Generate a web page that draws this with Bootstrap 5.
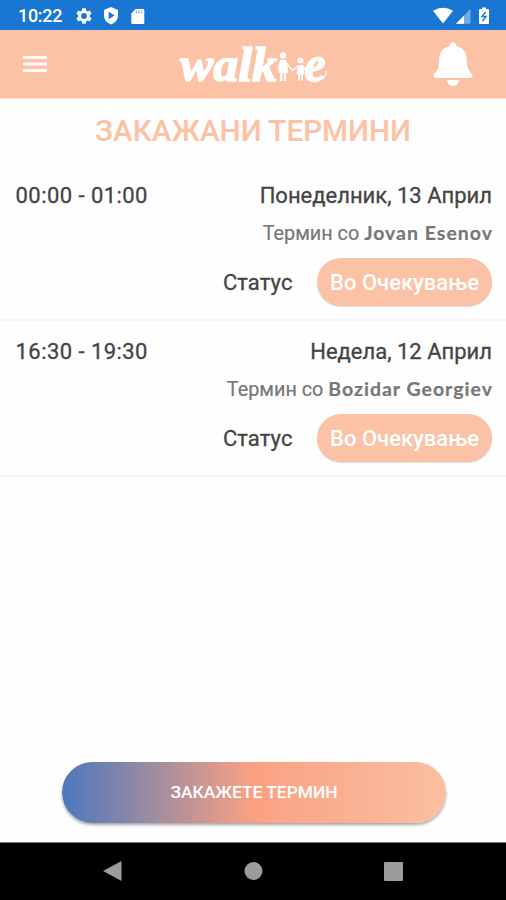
<!DOCTYPE html>
<html lang="mk">
<head>
<meta charset="utf-8">
<meta name="viewport" content="width=device-width, initial-scale=1">
<title>Walkie</title>
<link href="https://cdn.jsdelivr.net/npm/bootstrap@5.3.0/dist/css/bootstrap.min.css" rel="stylesheet">
<style>
body{font-family:Roboto,"Noto Sans",sans-serif;background:#fefefe;color:#444;height:900px;overflow:hidden}
svg{display:block;flex:none}
.statusbar{height:30px;background:#1976d2;padding:2px 15px 0 18px}
.clock{font-size:18px;font-weight:500;line-height:28px;letter-spacing:-.3px;width:58px;white-space:nowrap}
.appbar{height:69px;background:#fcc2a6;border-bottom:1px solid #fde0d2;padding:0 33px 0 22px}
.brand-mark{margin-left:26px}
.btn-plain{padding:0;border:0;background:none}
.page-title{height:66px;padding-top:14px;font-size:29.7px;line-height:36px;font-weight:500;color:#fcc2a6}
.slot{height:156px;padding:17px 14px 14px 15px;border:0;border-bottom:2px solid #f6f6f6!important;background:none;color:#444}
.slot-time,.slot-day,.slot-label{font-size:22px;line-height:28px;white-space:nowrap;-webkit-text-stroke:.3px #444}
.slot-time{letter-spacing:.12px;padding-left:.5px}
.slot-label{margin-right:24.500px;padding-top:2px;letter-spacing:.1px}
.slot-with{font-size:19.8px;line-height:24px;margin-top:11px;color:#777;white-space:nowrap;-webkit-text-stroke:.2px #777}
.slot-with b{font-family:Lato,sans-serif;font-weight:700;font-size:19.5px;letter-spacing:1px;margin-right:-1px}
.slot-state{margin-top:12px}
.pill{width:175px;height:48px;border-radius:24px;background:#fcc2a6;color:#fff;font-size:22px;font-weight:500;box-shadow:0 1px 1px #ddd;white-space:nowrap}
.book{width:384px;height:61px;border:0;border-radius:31px;color:#fff;font-size:17.4px;font-weight:500;background:linear-gradient(90deg,#4d77bd 0%,#fba183 50%,#fabfa2 100%);box-shadow:0 2px 3px rgba(0,0,0,.35);margin:auto 60px 19px 62px}
.navkeys{height:58px;background:#000;border-top:1px solid #777}
.t-time{letter-spacing:.45px}
</style>
<script src="https://cdn.jsdelivr.net/npm/bootstrap@5.3.0/dist/js/bootstrap.bundle.min.js"></script>
</head>
<body class="d-flex flex-column m-0">
<div class="statusbar d-flex align-items-center text-white">
  <span class="clock">10:22</span>
  <svg width="16" height="16" viewBox="2 2 20 20" fill="#fff"><path d="M19.14 12.94c.04-.3.06-.61.06-.94s-.02-.64-.07-.94l2.03-1.58a.49.49 0 0 0 .12-.61l-1.92-3.32a.49.49 0 0 0-.59-.22l-2.39.96a7 7 0 0 0-1.62-.94l-.36-2.54a.48.48 0 0 0-.48-.41h-3.84a.48.48 0 0 0-.47.41l-.36 2.54c-.59.24-1.13.57-1.62.94l-2.39-.96a.49.49 0 0 0-.59.22L2.74 8.87a.48.48 0 0 0 .12.61l2.03 1.58a7.500 7.500 0 0 0 0 1.880l-2.030 1.580a.49.49 0 0 0-.12.61l1.920 3.320c.12.22.37.29.59.22l2.390-.96c.5.38 1.030.7 1.620.94l.36 2.540c.05.24.24.41.48.41h3.840c.24 0 .44-.17.47-.41l.36-2.540a7 7 0 0 0 1.620-.94l2.390.96c.22.08.47 0 .59-.22l1.920-3.320a.49.49 0 0 0-.12-.61zM12 15.600A3.600 3.600 0 1 1 12 8.400a3.600 3.600 0 0 1 0 7.200z"/></svg>
  <svg class="ms-2" width="22" height="18" viewBox="0 0 22 18"><path fill="#fff" d="M11 0l7 3v5c0 5-3 8-7 9.500C7 16 4 13 4 8V3z"/><path fill="#1976d2" d="M8.600 4.800l6 3.700-6 3.700z"/></svg>
  <svg class="ms-2" width="15" height="17" viewBox="0 0 15 17"><path fill="#fff" d="M5.500 1H13a1.300 1.300 0 0 1 1.300 1.300v12.400A1.300 1.300 0 0 1 13 16H2.600a1.300 1.300 0 0 1-1.300-1.300V5.500z"/><path stroke="#1976d2" stroke-opacity=".5" stroke-width="1.300" d="M6.500 2.500v3M9 2.500v3M11.500 2.500v3"/></svg>
  <svg class="ms-auto" width="58" height="20" viewBox="433 5 58 20"><path fill="#fff" d="M433 9.800q10-6 20 0L443 22.500z"/><path fill="#fff" fill-opacity=".4" d="M470.500 8v14.700H456z"/><path fill="#fff" d="M464 14.600v8.100h-8z"/><path fill="#fff" d="M482 6.500h4v1.600h2q1 0 1 1V22q0 1-1 1h-8q-1 0-1-1V9.100q0-1 1-1h2z"/><path fill="none" stroke="#1976d2" stroke-width="1.400" d="M485.500 11l-3.500 4.500h4l-3.500 4.500"/></svg>
</div>
<header class="appbar d-flex align-items-center justify-content-between">
  <button class="btn-plain" aria-label="Мени"><svg width="26" height="20" viewBox="0 0 26 20"><path stroke="#fff" stroke-width="3" d="M1 3.500h24M1 10h24M1 16.500h24"/></svg></button>
  <svg class="brand-mark" width="156" height="68" viewBox="176 30 156 68" fill="#fff" stroke="#fff" stroke-linejoin="round" role="img">
    <g font-family="'Liberation Serif',serif" font-weight="700" font-style="italic" font-size="49" stroke-width="1.600"><text x="180" y="81" textLength="97" lengthAdjust="spacingAndGlyphs">walk</text><text x="304.500" y="81" font-size="51" textLength="21" lengthAdjust="spacingAndGlyphs">e</text></g>
    <g stroke="none"><circle cx="283" cy="55.500" r="3.200"/><path d="M280 60h6l2 9v4h-2v8h-2v-8h-1.500v8h-2.500v-8h-1.500z"/><circle cx="300.500" cy="60.500" r="3"/><path d="M298 65h5l1.500 9h-1.500v6.500h-2V74h-1v6.500h-2V74h-1.500z"/></g>
    <path fill="none" stroke-width="1.500" d="M281 61l-3 8M285 61l6 8 2 1 5-4M303 66l3 5M322 79q4-2 4.500-8"/>
  </svg>
  <button class="btn-plain" aria-label="Известувања"><svg width="40" height="46" viewBox="432.500 41 40 46" fill="#fff"><path d="M452.500 42.500a3.300 3.300 0 0 1 3.300 3.500c6.500 1.500 10.500 6.500 10.500 13.500 0 8.500 2 11 5 14.500 1.500 2 .5 4-2 4h-33.600c-2.500 0-3.500-2-2-4 3-3.500 5-6 5-14.500 0-7 4-12 10.500-13.500a3.300 3.300 0 0 1 3.300-3.500zM446.500 80h12a6 6 0 0 1-12 0z"/></svg></button>
</header>
<main class="d-flex flex-column flex-grow-1">
  <h1 class="page-title text-center m-0">ЗАКАЖАНИ ТЕРМИНИ</h1>
  <div class="list-group list-group-flush">
    <div class="list-group-item slot d-flex justify-content-between">
      <div class="slot-time"><span class="t-time">00:00 - 01:00</span></div>
      <div class="d-flex flex-column align-items-end">
        <div class="slot-day">Понеделник, 13 Април</div>
        <div class="slot-with">Термин со <b>Jovan Esenov</b></div>
        <div class="slot-state d-flex align-items-center"><span class="slot-label">Статус</span><span class="pill d-flex align-items-center justify-content-center">Во Очекување</span></div>
      </div>
    </div>
    <div class="list-group-item slot d-flex justify-content-between">
      <div class="slot-time"><span class="t-time">16:30 - 19:30</span></div>
      <div class="d-flex flex-column align-items-end">
        <div class="slot-day">Недела, 12 Април</div>
        <div class="slot-with">Термин со <b>Bozidar Georgiev</b></div>
        <div class="slot-state d-flex align-items-center"><span class="slot-label">Статус</span><span class="pill d-flex align-items-center justify-content-center">Во Очекување</span></div>
      </div>
    </div>
  </div>
  <button class="book">ЗАКАЖЕТЕ ТЕРМИН</button>
</main>
<footer class="navkeys"><svg width="506" height="57" viewBox="0 843 506 57" fill="#9c9c9c"><path d="M121.500 861v20L103 871z"/><circle cx="253.500" cy="871" r="9"/><rect x="384" y="862" width="19" height="19" rx="1"/></svg></footer>
</body>
</html>
